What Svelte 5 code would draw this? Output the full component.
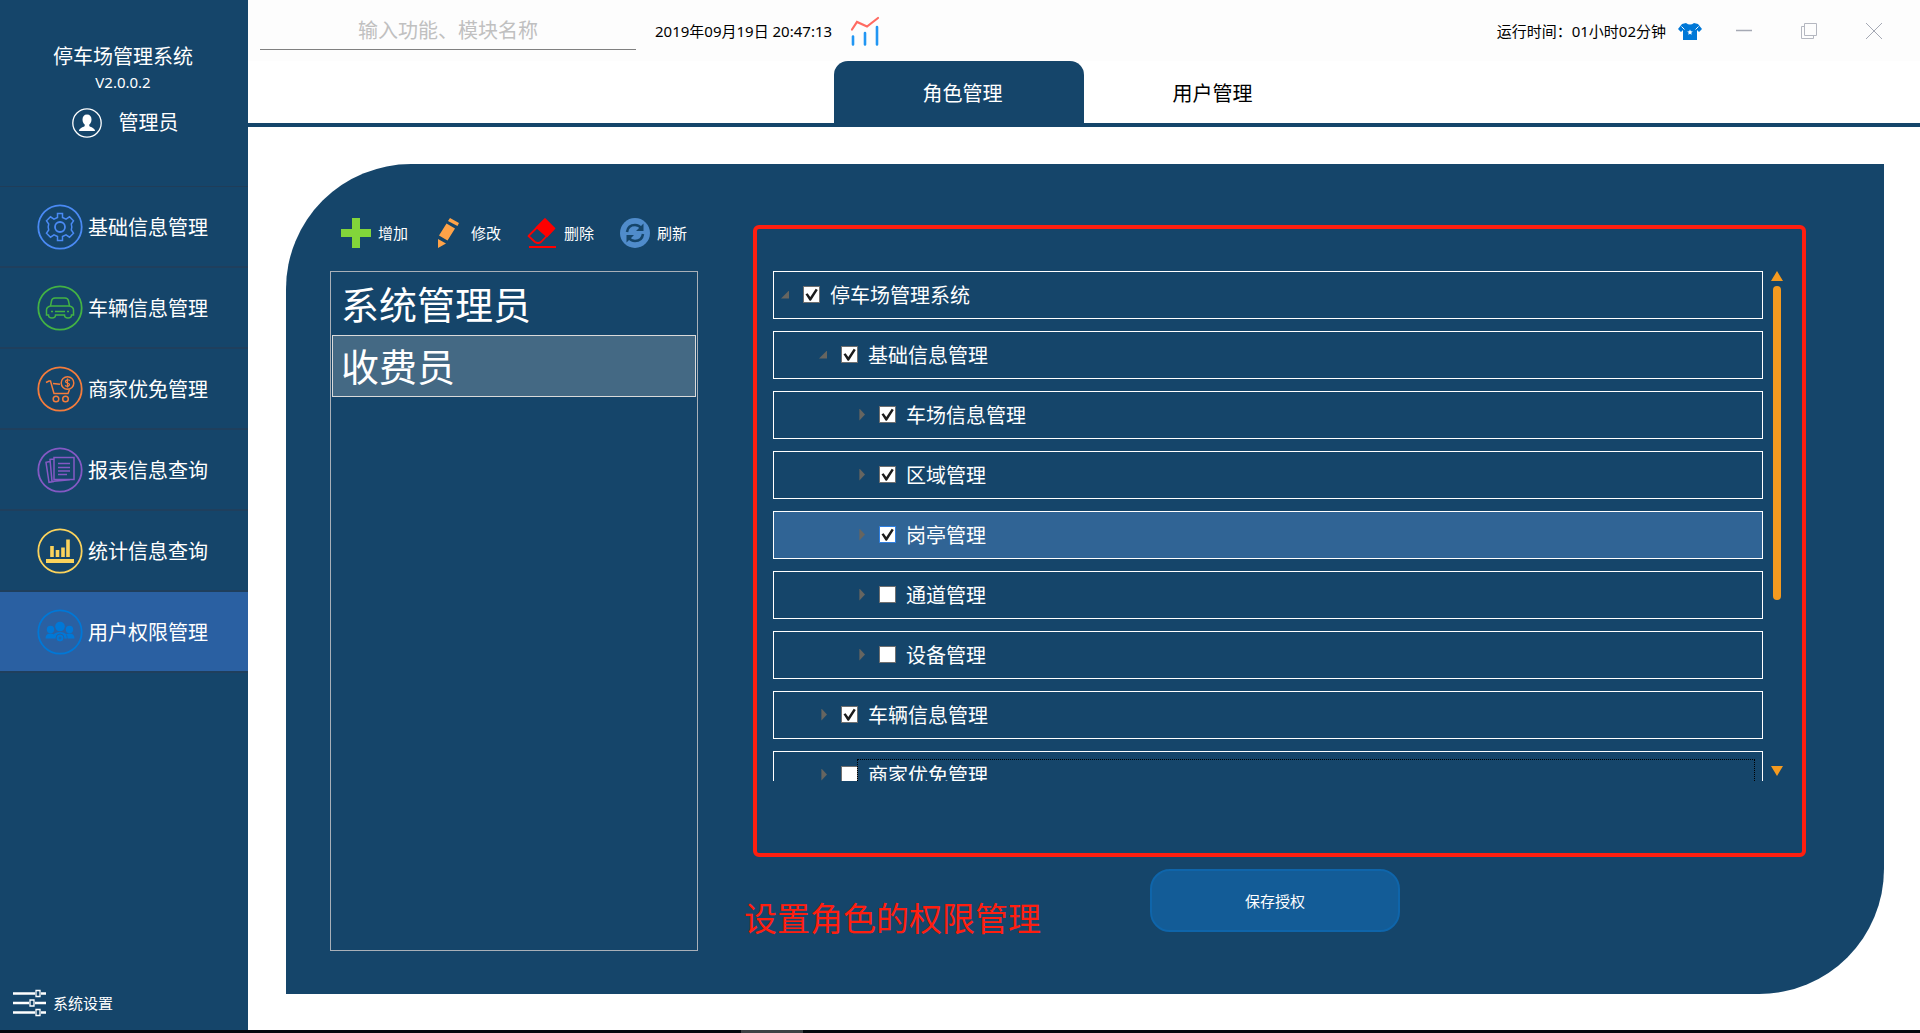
<script>
  const nav = [
    { icon: 'gear', label: '基础信息管理', color: '#4a8af4' },
    { icon: 'car', label: '车辆信息管理', color: '#43b244' },
    { icon: 'cart', label: '商家优免管理', color: '#f47c3c' },
    { icon: 'report', label: '报表信息查询', color: '#8459c4' },
    { icon: 'stats', label: '统计信息查询', color: '#fbd35c' },
    { icon: 'users', label: '用户权限管理', color: '#0078d7' }
  ];
  const tools = [
    { icon: 'add', label: '增加' },
    { icon: 'edit', label: '修改' },
    { icon: 'remove', label: '删除' },
    { icon: 'refresh', label: '刷新' }
  ];
  const roles = ['系统管理员', '收费员'];
  let current = $state('用户权限管理');
  let role = $state('收费员');
  let tab = $state('角色管理');
  let tree = $state([
    { label: '停车场管理系统', level: 0, open: true, checked: true },
    { label: '基础信息管理', level: 1, open: true, checked: true },
    { label: '车场信息管理', level: 2, open: false, checked: true },
    { label: '区域管理', level: 2, open: false, checked: true },
    { label: '岗亭管理', level: 2, open: false, checked: true, active: true },
    { label: '通道管理', level: 2, open: false, checked: false },
    { label: '设备管理', level: 2, open: false, checked: false },
    { label: '车辆信息管理', level: 1, open: false, checked: true },
    { label: '商家优免管理', level: 1, open: false, checked: false, focused: true }
  ]);
</script>

{#snippet navIcon(name, color)}
  <svg class="nav-icon" viewBox="0 0 46 46" fill="none" stroke={color} stroke-width="1.5" aria-hidden="true">
    <circle cx="23" cy="23" r="21.7" stroke-width="1.8" />
    {#if name === 'gear'}
      <path d="M20.5 9.5h5v4l3.5 1.6 3.5-2.3 4 4-2.2 3.2.5 3-.5 3 2.2 3.2-4 4-3.5-2.3-3.5 1.6v4h-5v-4L17 30.900l-3.500 2.300-4-4 2.200-3.200-.5-3 .5-3-2.200-3.200 4-4 3.500 2.300 3.500-1.600z" />
      <circle cx="23" cy="23" r="5" stroke-width="1.800" />
    {:else if name === 'car'}
      <path d="M13.500 21l1-5q.5-3 3.500-3h10q3 0 3.500 3l1 5q4 1 4 4v5h-2q0 3-3.500 3t-3.500-3h-9q0 3-3.500 3t-3.500-3h-2v-5q0-3 4-4z" />
      <path d="M13.500 21h19M18 26.500h10M14 26.500h2M30 26.500h2" />
    {:else if name === 'cart'}
      <path d="M9 16.500l3-1.500h1.500l3.500 12.500h14l1.500-4M16 17.500l7 .8" />
      <circle cx="30.500" cy="17" r="6.300" />
      <path d="M33 14.500q-2.500-1.500-4 0t1.500 2.500 1.500 2.500-4 0M30.500 12.500v9" stroke-width="1.200" />
      <circle cx="19" cy="33" r="2.800" /><circle cx="28.500" cy="33" r="2.800" />
    {:else if name === 'report'}
      <path d="M17 10.500h20v22H17zM17 12l-4 .5 2 22 18-1.800M13 14.500l-4 .8 3 20 5-.7" />
      <path d="M21 16.500h12M21 20.500h12M21 24h12M21 27.500h9" />
    {:else if name === 'stats'}
      <path d="M15 18v11M20.500 22v7M26 19.500v9.500M31 11.500v17.500" stroke-width="3.600" />
      <path d="M9 33h28" stroke-width="4" />
    {:else}
      <g fill={color} stroke="none">
        <circle cx="13.500" cy="20.500" r="3.700" /><circle cx="32.500" cy="20.500" r="3.700" />
        <circle cx="23" cy="17.500" r="4.800" />
        <path d="M8.500 29.500q0-5 5-5 2 0 3.500 1l-1 4zM37.500 29.500q0-5-5-5-2 0-3.500 1l1 4zM15.500 29.500q0-6.500 7.500-6.500t7.500 6.500z" />
      </g>
      <circle cx="23" cy="29" r="4" stroke="#2a60a2" stroke-width="1" fill={color} />
      <path d="M23 27.500v3M21.500 29h3" stroke="#2a60a2" stroke-width="1" />
    {/if}
  </svg>
{/snippet}

{#snippet toolIcon(name)}
  <svg class="tool-icon" viewBox="0 0 30 30" fill="none" aria-hidden="true">
    {#if name === 'add'}
      <path d="M11 0h8v11h11v8H19v11h-8V19H0v-8h11z" fill="#82d53a" />
    {:else if name === 'edit'}
      <g fill="#ffa348"><path d="M16 0l9 5-1.500 3L14 3zM12.500 5.500l8.500 5-7.500 12L5 17.500zM4 21l8 4.500-8 4.500z" /></g>
    {:else if name === 'remove'}
      <path d="M18 1.500l9 9-13 13.500q-3 2-6 0L1.500 18z" stroke="red" stroke-width="1.800" stroke-linejoin="round" />
      <path d="M18 0l10.500 10.500-8.500 9L8.500 9.500z" fill="red" />
      <path d="M2 29h27" stroke="red" stroke-width="2" />
    {:else}
      <circle cx="15" cy="15" r="15" fill="#508ccb" />
      <path d="M7 14q1-7 8-7 4 0 6.500 3.500M23 16q-1 7-8 7-4 0-6.500-3.500" stroke="#15456a" stroke-width="2.500" />
      <path d="M23.500 5.500v7.500h-7.500zM6.500 24.500V17H14z" fill="#15456a" />
    {/if}
  </svg>
{/snippet}

<div class="app">
  <div class="body">
    <aside>
      <div class="brand">
        <h1>停车场管理系统</h1>
        <span class="version">V2.0.0.2</span>
        <div class="user">
          <svg class="avatar" viewBox="0 0 30 30" aria-hidden="true">
            <circle cx="15" cy="15" r="14.200" fill="none" stroke="#fff" stroke-width="1.300" />
            <path d="M15 6.500c3 0 4.500 2 4.500 5 0 2.500-1 4-2.200 5v1.500c0 1 5.700 1.500 5.700 5H7c0-3.500 5.700-4 5.700-5v-1.500c-1.200-1-2.200-2.500-2.200-5 0-3 1.500-5 4.500-5z" fill="#fff" />
          </svg>
          <span>管理员</span>
        </div>
      </div>
      <nav>
        {#each nav as item}
          <button class="nav-item" class:selected={current === item.label} onclick={() => (current = item.label)}>
            {@render navIcon(item.icon, item.color)}
            <span>{item.label}</span>
          </button>
        {/each}
      </nav>
      <button class="settings">
        <svg viewBox="0 0 34 28" fill="none" stroke="#fff" aria-hidden="true">
          <path d="M0 4.500h22M28 4.500h5M0 14h16M22 14h11M0 23.500h22M28 23.500h5" stroke-width="2.400" />
          <path d="M23 1.500h4v6h-4zM17 11h4v6h-4zM23 20.500h4v6h-4z" stroke-width="1.300" />
        </svg>
        <span>系统设置</span>
      </button>
    </aside>

    <main>
      <header>
        <input class="search" type="text" aria-label="搜索" placeholder="输入功能、模块名称" />
        <time>2019年09月19日 20:47:13</time>
        <svg class="chart" viewBox="0 0 30 30" fill="none" stroke-linecap="round" aria-hidden="true">
          <path d="M2 13.500L7 6l10 4.500L28 2" stroke="#ff6b62" stroke-width="2.200" />
          <path d="M3 20.500v8M15 17v11.500M27 11v17.500" stroke="#2196f3" stroke-width="2.600" />
        </svg>
        <div class="window">
          <span class="runtime">运行时间：01小时02分钟</span>
          <button class="shirt" aria-label="换肤">
            <svg viewBox="0 0 24 18" aria-hidden="true">
              <path d="M8 1q4 3 8 0l4 1 4 5-3 3-2-2v10H5V8L3 10 0 7l4-5z" fill="#0078d7" />
              <path d="M3.500 4.500l3 3M20.500 4.500l-3 3" stroke="#fdfdfd" stroke-width="1" />
              <path d="M12 7.500l.8 1.800 2 .2-1.500 1.300.4 2-1.700-1-1.700 1 .4-2-1.500-1.300 2-.2z" fill="#fff" />
            </svg>
          </button>
          <div class="controls">
            <button aria-label="最小化"><svg viewBox="0 0 18 18" aria-hidden="true"><path d="M1 8.500h16" stroke="#a5a9b4" stroke-width="1.500" /></svg></button>
            <button aria-label="最大化"><svg viewBox="0 0 18 18" fill="none" stroke="#b4b7c0" aria-hidden="true"><path d="M4.500 1.500h12v12h-12zM4 4.500H1.500v12h12V14" /></svg></button>
            <button aria-label="关闭"><svg viewBox="0 0 18 18" stroke="#a5a9b4" aria-hidden="true"><path d="M1 1l16 16M17 1L1 17" /></svg></button>
          </div>
        </div>
      </header>

      <div class="tabs" role="tablist">
        {#each ['角色管理', '用户管理'] as name}
          <button role="tab" aria-selected={tab === name} class:on={tab === name} onclick={() => (tab = name)}>{name}</button>
        {/each}
      </div>

      <section class="panel">
        <div class="roles">
          <div class="toolbar">
            {#each tools as tool}
              <button>{@render toolIcon(tool.icon)}<span>{tool.label}</span></button>
            {/each}
          </div>
          <div class="role-list">
            {#each roles as name}
              <button class:picked={role === name} onclick={() => (role = name)}>{name}</button>
            {/each}
          </div>
        </div>

        <div class="rights">
          <div class="frame">
            <div class="tree">
              {#each tree as node, i}
                <div class="node level-{node.level}" class:active={node.active}>
                  <span class="arrow" class:open={node.open}></span>
                  <input type="checkbox" id="node-{i}" bind:checked={node.checked} />
                  <label for="node-{i}">{node.label}</label>
                  {#if node.focused}<span class="focus-ring"></span>{/if}
                </div>
              {/each}
            </div>
            <div class="scroll">
              <span class="up"></span>
              <span class="thumb"></span>
              <span class="down"></span>
            </div>
          </div>
          <div class="actions">
            <p>设置角色的权限管理</p>
            <button>保存授权</button>
          </div>
        </div>
      </section>
    </main>
  </div>
  <div class="taskbar"><span></span></div>
</div>

<style>
  :global(body) {
    margin: 0;
  }
  .app {
    --navy: #15456a;
    display: flex;
    flex-direction: column;
    min-height: 100vh;
    background: #fff;
    font-family: "Noto Sans", "Noto Sans CJK SC", sans-serif;
    font-size: 15px;
    color: #000;
  }
  button {
    font: inherit;
    color: inherit;
    border: 0;
    padding: 0;
    background: none;
    cursor: pointer;
  }
  svg {
    display: block;
    flex: none;
  }
  .body {
    flex: 1;
    display: flex;
  }
  aside {
    flex: none;
    width: 248px;
    display: flex;
    flex-direction: column;
    background: var(--navy);
    color: #fff;
  }
  .brand {
    display: flex;
    flex-direction: column;
    align-items: center;
    padding: 43px 2px 48px 0;
  }
  h1 {
    margin: 0;
    font-size: 20px;
    line-height: 28px;
    font-weight: 400;
  }
  .version {
    line-height: 22px;
  }
  .user {
    display: flex;
    align-items: center;
    gap: 17px;
    margin: 15px 0 0 4px;
    font-size: 20px;
    line-height: 30px;
  }
  .avatar {
    width: 30px;
    height: 30px;
  }
  nav {
    display: flex;
    flex-direction: column;
    border-top: 1px solid #1f3d59;
  }
  .nav-item {
    display: flex;
    align-items: center;
    gap: 5px;
    height: 81px;
    padding-left: 37px;
    border-bottom: 2px solid #1f3f5d;
    font-size: 20px;
  }
  .nav-item.selected {
    background: #2a60a2;
  }
  .nav-icon {
    width: 46px;
    height: 46px;
  }
  .settings {
    display: flex;
    align-items: center;
    gap: 6px;
    margin: auto 0 12px 13px;
    line-height: 30px;
  }
  .settings svg {
    width: 34px;
    height: 28px;
  }
  main {
    flex: 1;
    min-width: 0;
    display: flex;
    flex-direction: column;
  }
  header {
    display: flex;
    align-items: center;
    height: 61px;
    box-sizing: border-box;
    padding: 0 37px 0 12px;
    background: #fdfdfd;
  }
  .search {
    width: 376px;
    height: 38px;
    box-sizing: border-box;
    padding: 0;
    border: 0;
    border-bottom: 1px solid #808080;
    background: none;
    font: inherit;
    font-size: 20px;
    text-align: center;
    outline: none;
  }
  .search::placeholder {
    color: #c0c0c0;
  }
  time {
    margin-left: 19px;
  }
  .chart {
    width: 30px;
    height: 30px;
    margin-left: 18px;
  }
  .window {
    display: flex;
    align-items: center;
    margin-left: auto;
  }
  .shirt {
    margin: 0 33px 0 12px;
  }
  .shirt svg {
    width: 24px;
    height: 18px;
  }
  .controls {
    display: flex;
    gap: 47px;
  }
  .controls svg {
    width: 18px;
    height: 18px;
  }
  .tabs {
    display: flex;
    justify-content: center;
    border-bottom: 4px solid var(--navy);
  }
  .tabs button {
    width: 250px;
    height: 62px;
    padding-left: 7px;
    border-radius: 14px 14px 0 0;
    font-size: 20px;
  }
  .tabs .on {
    background: var(--navy);
    color: #fff;
  }
  .panel {
    flex: 1;
    display: flex;
    gap: 46px;
    margin: 37px 36px 36px 38px;
    padding: 0 78px 43px 44px;
    border-radius: 125px 0;
    background: var(--navy);
    color: #fff;
  }
  .roles {
    flex: none;
    width: 368px;
    display: flex;
    flex-direction: column;
  }
  .toolbar {
    display: flex;
    gap: 26px;
    padding: 54px 0 23px 11px;
  }
  .toolbar button {
    display: flex;
    align-items: center;
    gap: 7px;
    line-height: 30px;
  }
  .tool-icon {
    width: 30px;
    height: 30px;
  }
  .role-list {
    flex: 1;
    display: flex;
    flex-direction: column;
    padding: 1px;
    border: 1px solid #a9b0b8;
  }
  .role-list button {
    height: 62px;
    padding: 0 8px;
    border: 1px solid transparent;
    font-size: 38px;
    line-height: 60px;
    text-align: left;
  }
  .role-list .picked {
    background: #446984;
    border-color: #dadada;
  }
  .rights {
    flex: 1;
    min-width: 0;
    padding-top: 61px;
  }
  .frame {
    display: flex;
    gap: 8px;
    margin-left: 9px;
    padding: 42px 19px 72px 16px;
    border: 4px solid #ff1e0f;
    border-radius: 6px;
  }
  .tree {
    flex: 1;
    height: 510px;
    overflow: hidden;
    display: flex;
    flex-direction: column;
    gap: 12px;
  }
  .node {
    position: relative;
    flex: none;
    display: flex;
    align-items: center;
    height: 48px;
    box-sizing: border-box;
    padding: 0 0 1px 7px;
    border: 1px solid #fff;
    font-size: 20px;
  }
  .level-1 {
    padding-left: 45px;
  }
  .level-2 {
    padding-left: 83px;
  }
  .node.active {
    background: #306495;
  }
  .arrow {
    width: 8px;
    height: 12px;
    margin-right: 14px;
    background: #666560;
    clip-path: polygon(30% 0, 100% 50%, 30% 100%);
  }
  .arrow.open {
    height: 8px;
    clip-path: polygon(100% 0, 100% 100%, 0 100%);
  }
  .node input {
    appearance: none;
    width: 17px;
    height: 17px;
    margin: 0 10px 0 0;
    border: 1px solid #707070;
    background: #fff;
  }
  .node input:checked::after {
    content: "";
    display: block;
    width: 15px;
    height: 15px;
    background: #1c1c1c;
    clip-path: polygon(10% 48%, 24% 42%, 42% 66%, 78% 12%, 92% 20%, 46% 92%, 38% 92%);
  }
  .node.active input {
    border-color: #2f7fe0;
  }
  .focus-ring {
    position: absolute;
    inset: 7px 7px 7px 83px;
    border: 1px dotted #000;
  }
  .scroll {
    width: 12px;
    display: flex;
    flex-direction: column;
    align-items: center;
  }
  .up,
  .down {
    width: 12px;
    height: 10px;
    background: #f59a1f;
    clip-path: polygon(50% 0, 100% 100%, 0 100%);
  }
  .down {
    margin: auto 0 5px;
    clip-path: polygon(0 0, 100% 0, 50% 100%);
  }
  .thumb {
    width: 8px;
    height: 314px;
    margin-top: 5px;
    border-radius: 4px;
    background: #f59a1f;
  }
  .actions {
    display: flex;
    align-items: flex-start;
    gap: 109px;
    padding-top: 12px;
  }
  .actions p {
    margin: 28px 0 0;
    font-size: 33px;
    line-height: 44px;
    color: #ff1e0f;
  }
  .actions button {
    width: 250px;
    height: 63px;
    border: 2px solid #0f65aa;
    border-radius: 20px;
    background: #135c97;
  }
  .taskbar {
    height: 3px;
    background: #03080d;
  }
  .taskbar span {
    display: block;
    width: 62px;
    height: 3px;
    margin-left: 741px;
    background: #3c4043;
  }
</style>
